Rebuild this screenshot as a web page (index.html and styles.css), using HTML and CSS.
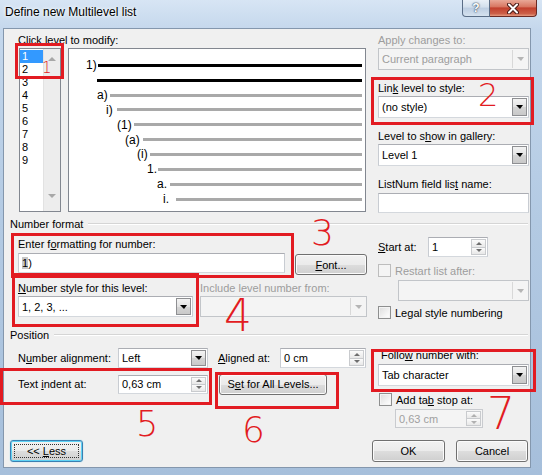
FILE: index.html
```html
<!DOCTYPE html>
<html lang="en">
<head>
    <meta charset="UTF-8">
    <title>Define new Multilevel list</title>
    <link rel="stylesheet" href="styles.css">
</head>
<body>
    <div class="window">
        <div class="titlebar">
            <span class="title">Define new Multilevel list</span>
            <div class="caption">
                <span class="cap-btn help">?</span>
                <span class="cap-btn close">
                    <svg width="12" height="11" viewBox="0 0 12 11">
                        <path d="M2 1.5 L10 9.5 M10 1.5 L2 9.5" stroke="#4a1a16" stroke-width="4" stroke-linecap="round"/>
                        <path d="M2 1.5 L10 9.5 M10 1.5 L2 9.5" stroke="#fff" stroke-width="2" stroke-linecap="round"/>
                    </svg>
                </span>
            </div>
        </div>

        <div class="client">
            <!-- levels + preview + link settings -->
            <div class="sec-top">
                <div class="levels">
                    <div class="lbl">Click level to modify:</div>
                    <div class="levels-row">
                        <div class="level-list">
                            <ul class="items">
                                <li class="sel">1</li>
                                <li>2</li>
                                <li>3</li>
                                <li>4</li>
                                <li>5</li>
                                <li>6</li>
                                <li>7</li>
                                <li>8</li>
                                <li>9</li>
                            </ul>
                            <div class="vscroll">
                                <span class="tri up"></span>
                                <span class="tri down"></span>
                            </div>
                        </div>
                        <div class="preview">
                            <div class="pv-row"><span class="num">1)</span><span class="bar dark"></span></div>
                            <div class="pv-row"><span class="bar dark"></span></div>
                            <div class="pv-row"><span class="num">a)</span><span class="bar"></span></div>
                            <div class="pv-row"><span class="num">i)</span><span class="bar"></span></div>
                            <div class="pv-row"><span class="num">(1)</span><span class="bar"></span></div>
                            <div class="pv-row"><span class="num">(a)</span><span class="bar"></span></div>
                            <div class="pv-row"><span class="num">(i)</span><span class="bar"></span></div>
                            <div class="pv-row"><span class="num">1.</span><span class="bar"></span></div>
                            <div class="pv-row"><span class="num">a.</span><span class="bar"></span></div>
                            <div class="pv-row"><span class="num">i.</span><span class="bar"></span></div>
                        </div>
                    </div>
                </div>

                <div class="side">
                    <div class="lbl disabled">Apply changes to:</div>
                    <div class="dd off"><span>Current paragraph</span><span class="dd-btn"><span class="tri down"></span></span></div>
                    <div class="lbl gap">Lin<u>k</u> level to style:</div>
                    <div class="dd"><span>(no style)</span><span class="dd-btn"><span class="tri down"></span></span></div>
                    <div class="lbl gap">Level to s<u>h</u>ow in gallery:</div>
                    <div class="dd"><span>Level 1</span><span class="dd-btn"><span class="tri down"></span></span></div>
                    <div class="lbl gap">ListNum field lis<u>t</u> name:</div>
                    <div class="text-input wide"></div>
                </div>
            </div>

            <div class="group-head"><span>Number format</span><i class="rule"></i></div>

            <div class="sec-format">
                <div class="col-left">
                    <div class="lbl first">Enter f<u>o</u>rmatting for number:</div>
                    <div class="row fmt-row">
                        <div class="text-input fmt"><span><span class="field-code">1</span>)</span></div>
                        <span class="btn font-btn"><span><u>F</u>ont...</span></span>
                    </div>
                    <div class="row label-row">
                        <span class="lbl style-lbl"><u>N</u>umber style for this level:</span>
                        <span class="lbl disabled">Include level number from:</span>
                    </div>
                    <div class="row">
                        <div class="dd style-dd"><span>1, 2, 3, ...</span><span class="dd-btn"><span class="tri down"></span></span></div>
                        <div class="dd off include-dd"><span></span><span class="dd-btn"><span class="tri down"></span></span></div>
                    </div>
                </div>
                <div class="col-right">
                    <div class="row start-row">
                        <span class="lbl start-lbl"><u>S</u>tart at:</span>
                        <div class="spin start-spin"><span class="val">1</span><span class="arrows"><span><i class="tri up"></i></span><span><i class="tri down"></i></span></span></div>
                    </div>
                    <div class="chk-row restart"><span class="chk off"></span><span class="disabled">Restart list after:</span></div>
                    <div class="dd off restart-dd"><span></span><span class="dd-btn"><span class="tri down"></span></span></div>
                    <div class="chk-row legal"><span class="chk"></span><span>Le<u>g</u>al style numbering</span></div>
                </div>
            </div>

            <div class="group-head"><span>Position</span><i class="rule"></i></div>

            <div class="sec-pos">
                <div class="col-left">
                    <div class="row pos-row">
                        <span class="lbl pos-lbl">N<u>u</u>mber alignment:</span>
                        <div class="dd align-dd"><span>Left</span><span class="dd-btn"><span class="tri down"></span></span></div>
                        <span class="lbl aligned-lbl"><u>A</u>ligned at:</span>
                        <div class="spin aligned-spin"><span class="val">0 cm</span><span class="arrows"><span><i class="tri up"></i></span><span><i class="tri down"></i></span></span></div>
                    </div>
                    <div class="row pos-row">
                        <span class="lbl pos-lbl">Text <u>i</u>ndent at:</span>
                        <div class="spin indent-spin"><span class="val">0,63 cm</span><span class="arrows"><span><i class="tri up"></i></span><span><i class="tri down"></i></span></span></div>
                        <span class="btn all-btn"><span>S<u>e</u>t for All Levels...</span></span>
                    </div>
                </div>
                <div class="col-right">
                    <div class="lbl follow-lbl">Follo<u>w</u> number with:</div>
                    <div class="dd follow-dd"><span>Tab character</span><span class="dd-btn"><span class="tri down"></span></span></div>
                    <div class="chk-row tabstop"><span class="chk"></span><span>Add ta<u>b</u> stop at:</span></div>
                    <div class="spin off tab-spin"><span class="val">0,63 cm</span><span class="arrows"><span><i class="tri up"></i></span><span><i class="tri down"></i></span></span></div>
                </div>
            </div>

            <div class="footer">
                <span class="btn less-btn"><span>&lt;&lt; <u>L</u>ess</span></span>
                <span class="btn ok-btn"><span>OK</span></span>
                <span class="btn cancel-btn"><span>Cancel</span></span>
            </div>
        </div>

        <!-- red annotations drawn over the dialog -->
        <div class="mark box-1"></div>
        <div class="mark box-2"></div>
        <div class="mark box-3"></div>
        <div class="mark box-4"></div>
        <div class="mark box-5"></div>
        <div class="mark box-6"></div>
        <div class="mark box-7"></div>
        <span class="note n1">1</span>
        <span class="note n2">2</span>
        <span class="note n3">3</span>
        <span class="note n4">4</span>
        <span class="note n5">5</span>
        <span class="note n6">6</span>
        <span class="note n7">7</span>
    </div>
</body>
</html>
```

FILE: styles.css
```css
body {
    margin: 0;
    font-family: "Liberation Sans", Arial, sans-serif;
    font-size: 11px;
    color: #000;
}

ul {
    list-style: none;
    margin: 0;
    padding: 0;
}

.window {
    position: relative;
    width: 542px;
    height: 475px;
    overflow: hidden;
    background: linear-gradient(180deg, #d7e5f4 0, #c4d7ec 30px, #b3cae3 220px, #a6bfdb 475px);
}

/* title bar */
.titlebar {
    height: 28px;
    display: flex;
    align-items: flex-start;
}

.title {
    padding: 5px 0 0 5px;
    font-size: 12px;
    line-height: 14px;
    text-shadow: 0 0 5px #fff, 0 0 3px #fff;
}

.caption {
    margin-left: auto;
    margin-right: 5px;
    display: flex;
}

.cap-btn {
    height: 17px;
    box-sizing: border-box;
    border: 1px solid #5a6d86;
    border-top: none;
    display: flex;
    align-items: center;
    justify-content: center;
}

.help {
    width: 28px;
    border-radius: 0 0 0 4px;
    background: linear-gradient(180deg, #e9f0f7 0, #d2dfec 45%, #bccde1 50%, #d5e2ef 100%);
    color: #fff;
    font-weight: bold;
    font-size: 12px;
    text-shadow: 0 0 2px #2d4058, 0 0 1px #2d4058;
}

.close {
    width: 47px;
    border-color: #6a2a24;
    border-left: none;
    border-radius: 0 0 4px 0;
    background: linear-gradient(180deg, #e9a897 0, #d87762 42%, #c2402d 50%, #cc5f48 85%, #e69a80 100%);
}

/* client area */
.client {
    margin-left: 3px;
    width: 528px;
    height: 440px;
    box-sizing: border-box;
    border: 1px solid #8497ad;
    background: #f0f0f0;
    display: flex;
    flex-direction: column;
}

.lbl {
    line-height: 14px;
    white-space: nowrap;
}

.disabled {
    color: #9d9d9d;
}

.row {
    display: flex;
    align-items: center;
}

/* top section */
.sec-top {
    height: 188px;
    display: flex;
}

.levels {
    margin-left: 14px;
    padding-top: 4px;
}

.levels-row {
    display: flex;
    margin-top: 1px;
    margin-left: 1px;
}

.level-list {
    width: 42px;
    height: 164px;
    box-sizing: border-box;
    border: 1px solid #828790;
    background: #fff;
    display: flex;
}

.items {
    flex: 1;
    padding-top: 1px;
}

.items li {
    height: 13px;
    line-height: 13px;
    padding-left: 2px;
}

.items li.sel {
    background: #3399ff;
    color: #fff;
}

.vscroll {
    width: 17px;
    background: #ededed;
    border-left: 1px solid #e2e2e2;
    display: flex;
    flex-direction: column;
    align-items: center;
    justify-content: space-between;
    padding: 8px 0 13px;
    box-sizing: border-box;
}

.tri {
    display: block;
    width: 0;
    height: 0;
    border-left: 4px solid transparent;
    border-right: 4px solid transparent;
}

.tri.up {
    border-bottom: 4px solid #a8a8a8;
}

.tri.down {
    border-top: 4px solid #a8a8a8;
}

.preview {
    margin-left: 7px;
    width: 298px;
    height: 164px;
    box-sizing: border-box;
    border: 1px solid #828790;
    background: #fff;
    padding: 9px 3px 0 0;
}

.pv-row {
    height: 14.85px;
    display: flex;
    align-items: center;
}

.num {
    font-size: 12px;
    line-height: 14px;
}

.bar {
    flex: 1;
    height: 3px;
    background: #a9a9a9;
}

.bar.dark {
    background: #000;
}

.pv-row:nth-child(1) { padding-left: 17px; }
.pv-row:nth-child(1) .num { width: 12px; }
.pv-row:nth-child(2) { padding-left: 28px; }
.pv-row:nth-child(3) { padding-left: 28px; }
.pv-row:nth-child(3) .num { width: 13px; }
.pv-row:nth-child(4) { padding-left: 37px; }
.pv-row:nth-child(4) .num { width: 11px; }
.pv-row:nth-child(5) { padding-left: 48px; }
.pv-row:nth-child(5) .num { width: 17px; }
.pv-row:nth-child(6) { padding-left: 56px; }
.pv-row:nth-child(6) .num { width: 18px; }
.pv-row:nth-child(7) { padding-left: 68px; }
.pv-row:nth-child(7) .num { width: 13px; }
.pv-row:nth-child(8) { padding-left: 78px; }
.pv-row:nth-child(8) .num { width: 11px; }
.pv-row:nth-child(9) { padding-left: 88px; }
.pv-row:nth-child(9) .num { width: 13px; }
.pv-row:nth-child(10) { padding-left: 94px; }
.pv-row:nth-child(10) .num { width: 13px; }

.side {
    margin-left: 12px;
    width: 151px;
    padding-top: 4px;
}

.side .lbl.gap {
    margin-top: 11px;
}

.side .dd {
    margin-top: 1px;
}

/* controls */
.dd {
    height: 22px;
    box-sizing: border-box;
    border: 1px solid #abadb3;
    border-color: #abadb3 #c8ccd2 #d4d8dd #c8ccd2;
    background: #fff;
    display: flex;
    align-items: center;
    padding-left: 3px;
    white-space: nowrap;
}

.dd-btn {
    margin-left: auto;
    margin-right: 1px;
    width: 15px;
    align-self: stretch;
    margin-top: 1px;
    margin-bottom: 1px;
    box-sizing: border-box;
    border: 1px solid #8e8f92;
    background: linear-gradient(180deg, #f3f3f3 0, #e3e3e3 50%, #d4d4d4 51%, #c9c9c9 100%);
    display: flex;
    align-items: center;
    justify-content: center;
}

.dd-btn .tri.down {
    border-left-width: 4px;
    border-right-width: 3px;
    border-top: 4px solid #000;
}

.dd.off {
    background: #f4f4f4;
    border-color: #c2c5c9;
    color: #9d9d9d;
}

.dd.off .dd-btn {
    border: none;
    border-left: 1px solid #d8d8d8;
    background: none;
}

.dd.off .dd-btn .tri.down {
    border-top-color: #b5b5b5;
}

.text-input {
    height: 20px;
    box-sizing: border-box;
    border: 1px solid;
    border-color: #abadb3 #c8ccd2 #d4d8dd #c8ccd2;
    background: #fff;
    display: flex;
    align-items: center;
    padding-left: 3px;
}

.side .text-input.wide {
    margin-top: 2px;
}

.spin {
    height: 20px;
    box-sizing: border-box;
    border: 1px solid;
    border-color: #abadb3 #c8ccd2 #d4d8dd #c8ccd2;
    background: #fff;
    display: flex;
    align-items: center;
}

.spin .val {
    flex: 1;
    padding-left: 3px;
}

.spin .arrows {
    width: 15px;
    align-self: stretch;
    margin: 1px;
    display: flex;
    flex-direction: column;
}

.spin .arrows span {
    flex: 1;
    border: 1px solid #c9cbce;
    background: linear-gradient(180deg, #fbfbfb, #e8e8e8);
    display: flex;
    align-items: center;
    justify-content: center;
}

.spin .arrows span + span {
    border-top: none;
}

.spin .tri {
    border-left-width: 3px;
    border-right-width: 3px;
}

.spin .tri.up {
    border-bottom: 3px solid #6e6e6e;
}

.spin .tri.down {
    border-top: 3px solid #6e6e6e;
}

.spin.off {
    background: #f4f4f4;
    border-color: #c9cbcf;
    color: #a0a0a0;
}

.spin.off .tri.up {
    border-bottom-color: #b0b0b0;
}

.spin.off .tri.down {
    border-top-color: #b0b0b0;
}

.chk-row {
    display: flex;
    align-items: center;
    height: 13px;
    white-space: nowrap;
}

.chk {
    width: 13px;
    height: 13px;
    box-sizing: border-box;
    border: 1px solid #8e8f8f;
    background: linear-gradient(135deg, #dcdcdc 0, #f6f6f6 70%, #ffffff 100%);
    box-shadow: inset 0 0 0 1px #f4f4f4;
    margin-right: 4px;
}

.chk.off {
    border-color: #bdbdbd;
    background: #f4f4f4;
}

.btn {
    position: relative;
    box-sizing: border-box;
    border: 1px solid #707070;
    border-radius: 3px;
    background: linear-gradient(180deg, #f2f2f2 0, #ebebeb 50%, #dddddd 51%, #cfcfcf 100%);
    box-shadow: inset 0 0 0 1px #fbfbfb;
    display: flex;
    align-items: center;
    justify-content: center;
    white-space: nowrap;
}

/* group headers */
.group-head {
    height: 14px;
    display: flex;
    align-items: center;
    padding-left: 6px;
    padding-right: 2px;
    line-height: 14px;
}

.group-head .rule {
    flex: 1;
    margin-left: 5px;
    border-top: 1px solid #d5d5d5;
    border-bottom: 1px solid #fff;
}

/* number format section */
.sec-format {
    height: 97px;
    display: flex;
}

.col-left {
    margin-left: 14px;
    width: 349px;
}

.col-right {
    margin-left: 11px;
    width: 151px;
}

.sec-format .lbl.first {
    margin-top: 6px;
}

.fmt-row {
    margin-top: 2px;
    align-items: flex-start;
}

.text-input.fmt {
    width: 267px;
}

.field-code {
    background: #c6c6c6;
    line-height: 15px;
}

.font-btn {
    margin-left: 10px;
    margin-top: 1px;
    width: 72px;
    height: 21px;
}

.label-row {
    margin-top: 6px;
}

.style-lbl {
    width: 182px;
}

.style-dd {
    width: 175px;
    height: 21px;
    margin-top: 1px;
}

.include-dd {
    margin-left: 7px;
    width: 167px;
    height: 21px;
    margin-top: 1px;
}

.start-row {
    margin-top: 6px;
    height: 20px;
}

.start-lbl {
    width: 50px;
}

.start-spin {
    width: 60px;
}

.chk-row.restart {
    margin-top: 7px;
}

.restart-dd {
    margin-top: 3px;
    margin-left: 20px;
    width: 131px;
    height: 21px;
}

.chk-row.legal {
    margin-top: 5px;
}

/* position section */
.sec-pos {
    height: 98px;
    display: flex;
}

.pos-row {
    margin-top: 6px;
    height: 20px;
}

.pos-lbl {
    width: 100px;
}

.align-dd {
    width: 90px;
    height: 20px;
}

.aligned-lbl {
    margin-left: 10px;
    width: 62px;
}

.aligned-spin {
    width: 86px;
}

.indent-spin {
    width: 90px;
    height: 19px;
}

.all-btn {
    margin-left: 11px;
    width: 108px;
    height: 21px;
}

.follow-lbl {
    margin-top: 6px;
    padding-left: 3px;
}

.follow-dd {
    margin-top: 2px;
    height: 22px;
}

.chk-row.tabstop {
    margin-top: 7px;
    padding-left: 1px;
}

.tab-spin {
    margin-top: 3px;
    margin-left: 17px;
    width: 88px;
    height: 19px;
}

/* footer */
.footer {
    display: flex;
    height: 22px;
    padding: 0 2px 0 6px;
}

.less-btn {
    width: 73px;
    border-color: #3c7fb1;
    box-shadow: inset 0 0 0 1px #5fd3f5, 0 0 1px #5fd3f5;
}

.less-btn::after {
    content: "";
    position: absolute;
    inset: 3px;
    border: 1px dotted #333;
}

.ok-btn {
    margin-left: auto;
    width: 73px;
}

.cancel-btn {
    margin-left: 11px;
    width: 72px;
}

/* red annotations */
.mark {
    position: absolute;
    box-sizing: border-box;
    border: 3px solid #e21b22;
}

.box-1 { left: 15px; top: 43px; width: 49px; height: 36px; }
.box-2 { left: 371px; top: 77px; width: 163px; height: 48px; }
.box-3 { left: 11px; top: 233px; width: 283px; height: 45px; }
.box-4 { left: 12px; top: 273px; width: 187px; height: 54px; }
.box-5 { left: 0; top: 368px; width: 212px; height: 37px; }
.box-6 { left: 215px; top: 372px; width: 124px; height: 37px; }
.box-7 { left: 371px; top: 349px; width: 165px; height: 43px; }

.note {
    position: absolute;
    color: #e21b22;
    font-family: "DejaVu Sans", sans-serif;
    font-weight: 200;
    line-height: 1;
}

.n1 { left: 42px; top: 61px; font-size: 15px; }
.n2 { left: 478px; top: 79px; font-size: 32px; }
.n3 { left: 311px; top: 215px; font-size: 36px; }
.n4 { left: 224px; top: 294px; font-size: 44px; }
.n5 { left: 136px; top: 407px; font-size: 35px; }
.n6 { left: 242px; top: 412px; font-size: 36px; }
.n7 { left: 487px; top: 392px; font-size: 44px; }
```
